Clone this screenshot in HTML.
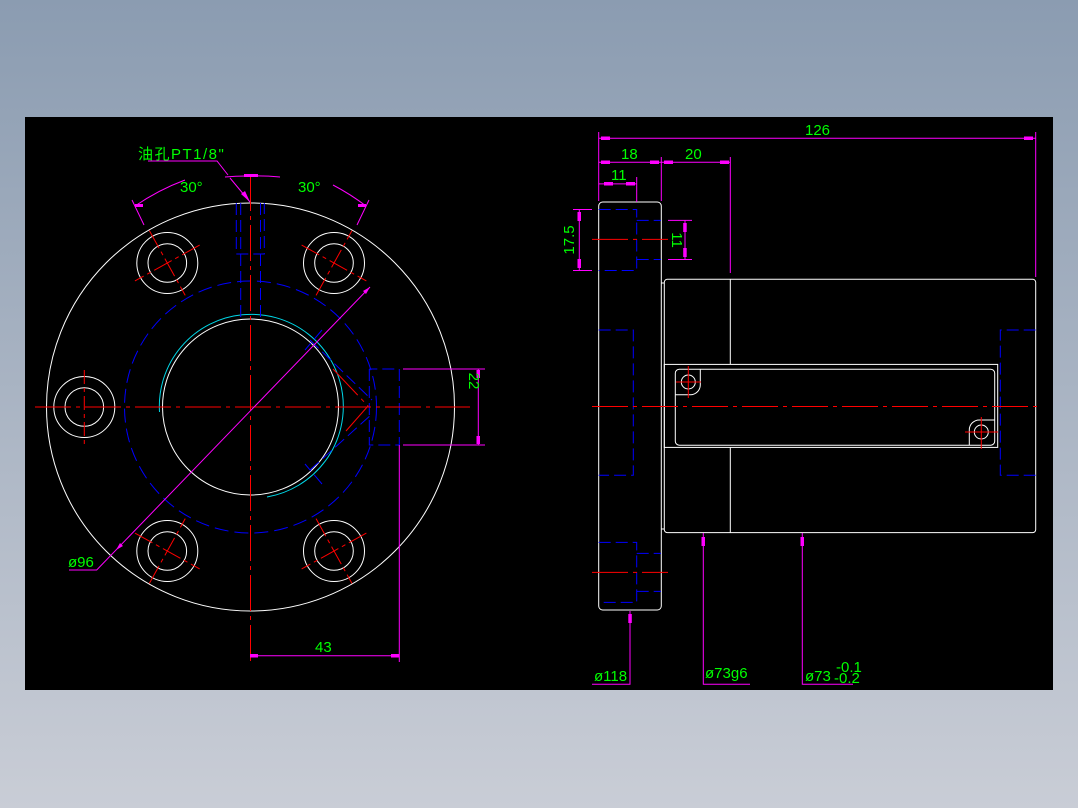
<!DOCTYPE html>
<html><head><meta charset="utf-8"><style>
html,body{margin:0;padding:0;width:1078px;height:808px;overflow:hidden;background:linear-gradient(#8b9cb1,#c9cdd6);}
svg{position:absolute;left:0;top:0}
text{font-family:"Liberation Sans","Noto Sans CJK SC",sans-serif;fill:#00ff00;font-size:15px}
</style></head><body>
<svg width="1078" height="808" viewBox="0 0 1078 808">
<rect x="25" y="117" width="1028" height="573" fill="#000"/>
<g fill="none" stroke-width="1">
<g stroke="#fff">
<circle cx="250.5" cy="407" r="204"/>
<circle cx="250.5" cy="407" r="88"/>
<circle cx="167.3" cy="263" r="30.5"/><circle cx="167.3" cy="263" r="19.3"/>
<circle cx="334" cy="263" r="30.5"/><circle cx="334" cy="263" r="19.3"/>
<circle cx="167.3" cy="551" r="30.5"/><circle cx="167.3" cy="551" r="19.3"/>
<circle cx="334" cy="551" r="30.5"/><circle cx="334" cy="551" r="19.3"/>
<circle cx="84.3" cy="407" r="30.5"/><circle cx="84.3" cy="407" r="19.3"/>
</g>
<path d="M159.5 412 A92 92 0 1 1 267 497" stroke="#00d8e8"/>
<circle cx="250.5" cy="407" r="126" stroke="#0000ff" stroke-dasharray="14 6"/>
<g stroke="#0000ff" stroke-dasharray="12 5">
<path d="M236.3 203 V254 H264.3 V203 M240.7 203 V318 M260.5 203 V318"/>
<path d="M369.3 369 V445 H399.3 V369 H369.3"/>
<path d="M310 340 L372 400 M310 470 L372 414 M322 330 L305 350 M322 484 L305 464"/>
</g>
<g stroke="#ff0000" stroke-dasharray="36 5 4 5">
<path d="M35 407 H470 M250.5 175 V662"/>
<path d="M333 369 L368 406 L346 431"/>
</g>
<g stroke="#ff0000">
<g transform="translate(167.3 263) rotate(61)"><path d="M-37 0 H37 M0 -37 V37" stroke-dasharray="20 4 4 4"/></g>
<g transform="translate(334 263) rotate(-61)"><path d="M-37 0 H37 M0 -37 V37" stroke-dasharray="20 4 4 4"/></g>
<g transform="translate(167.3 551) rotate(-61)"><path d="M-37 0 H37 M0 -37 V37" stroke-dasharray="20 4 4 4"/></g>
<g transform="translate(334 551) rotate(61)"><path d="M-37 0 H37 M0 -37 V37" stroke-dasharray="20 4 4 4"/></g>
<path d="M84.3 370 V444" stroke-dasharray="14 4 4 4"/>
</g>
<g stroke="#ff00ff">
<path d="M148 161 H217 L228 175 M230 178 L250 202"/>
<path d="M135 206 A231 231 0 0 1 185 180 M225 177 A231 231 0 0 1 250 176 A231 231 0 0 1 280 177 M333 185 A231 231 0 0 1 366 206"/>
<path d="M144 225 L132 200 M357 225 L369 200"/>
<path d="M370 287 L96.7 570 H69"/>
<path d="M250 655.7 H399.3 M399.3 445 V662"/>
<path d="M403 369 H485 M403 445 H485 M478.3 369 V445"/>
</g>
<g fill="#ff00ff">
<rect x="250" y="654" width="8" height="3.5"/><rect x="391" y="654" width="8" height="3.5"/>
<rect x="476.5" y="370" width="3.5" height="8"/><rect x="476.5" y="436" width="3.5" height="8"/>
<path d="M250 202 L241 194 L245 191Z"/>
<rect x="135" y="204" width="8" height="3"/><rect x="358" y="204" width="8" height="3"/>
<rect x="244" y="174" width="14" height="3"/>
<path d="M370 287 L363 291 L366 294Z M116 550 L123 546 L120 543Z"/>
</g>
<g stroke="#fff">
<rect x="598.7" y="202" width="62.6" height="408" rx="4"/>
<path d="M661.3 283 H664.3 M661.3 529 H664.3"/>
<rect x="664.3" y="279.3" width="371.4" height="253.3" rx="3"/>
<path d="M730.3 279.3 V364.4 M730.3 447.4 V532.6"/>
<rect x="664.3" y="364.4" width="333.4" height="83"/>
<rect x="675.3" y="369.2" width="319.4" height="76" rx="4"/>
<circle cx="688.3" cy="382" r="7"/><circle cx="981.3" cy="432" r="7"/>
<path d="M675.3 394.8 H690 A10 10 0 0 0 700.3 385 V369.2"/>
<path d="M969.3 445.2 V430 A10 10 0 0 1 980 420 H994.7"/>
</g>
<g stroke="#0000ff" stroke-dasharray="12 5">
<path d="M598.7 209.5 H636.7 V270.5 H598.7 M636.7 220.4 H661 M636.7 259.5 H661"/>
<path d="M598.7 542.4 H636.7 V602.4 H598.7 M636.7 553.4 H661 M636.7 591.4 H661"/>
<path d="M598.7 330 H633.3 V475.2 H598.7"/>
<path d="M1035.7 330 H1000.3 V475.2 H1035.7"/>
</g>
<g stroke="#ff0000" stroke-dasharray="36 5 4 5">
<path d="M592 406.5 H1042 M592 239.4 H668 M592 572.4 H668"/>
</g>
<g stroke="#ff0000">
<path d="M676 382 H701 M688.3 366 V398 M965 432 H998 M981.3 417 V449"/>
</g>
<g stroke="#ff00ff">
<path d="M598.7 138.2 H1035.7 M598.7 132 V201 M1035.7 132 V277"/>
<path d="M598.7 162.3 H730.3 M661.3 157 V201 M730.3 157 V273"/>
<path d="M598.7 183.9 H636.7 M636.7 177 V202"/>
<path d="M579.3 209.5 V270.5 M573 209.5 H592 M573 270.5 H592"/>
<path d="M685 220.4 V259.5 M668 220.4 H692 M668 259.5 H692"/>
<path d="M630 611 V684.2 H592"/>
<path d="M703.3 533 V684.2 H750"/>
<path d="M802.3 533 V684.2 H853"/>
</g>
<g fill="#ff00ff">
<rect x="601" y="136.5" width="9" height="3.5"/><rect x="1024" y="136.5" width="9" height="3.5"/>
<rect x="601" y="160.5" width="9" height="3.5"/><rect x="650" y="160.5" width="9" height="3.5"/>
<rect x="664" y="160.5" width="9" height="3.5"/><rect x="720" y="160.5" width="9" height="3.5"/>
<rect x="604" y="182" width="9" height="3.5"/><rect x="626" y="182" width="9" height="3.5"/>
<rect x="577.5" y="212" width="3.5" height="9"/><rect x="577.5" y="259" width="3.5" height="9"/>
<rect x="683.2" y="223" width="3.5" height="9"/><rect x="683.2" y="248" width="3.5" height="9"/>
<rect x="628.3" y="614" width="3.5" height="9"/><rect x="701.5" y="537" width="3.5" height="9"/><rect x="800.5" y="537" width="3.5" height="9"/>
</g>
</g>
<text x="138" y="159" font-size="16" letter-spacing="1.5">油孔PT1/8"</text>
<text x="180" y="192">30°</text>
<text x="298" y="192">30°</text>
<text x="68" y="567">ø96</text>
<text x="315" y="652">43</text>
<text transform="translate(469 381) rotate(90)" text-anchor="middle">22</text>
<text x="805" y="135">126</text>
<text x="621" y="159">18</text>
<text x="685" y="159">20</text>
<text x="611" y="180">11</text>
<text transform="translate(574 240) rotate(-90)" text-anchor="middle">17.5</text>
<text transform="translate(672 240) rotate(90)" text-anchor="middle">11</text>
<text x="594" y="681">ø118</text>
<text x="705" y="678">ø73g6</text>
<text x="805" y="681">ø73</text>
<text x="836" y="672" font-size="10">-0.1</text>
<text x="834" y="683" font-size="10">-0.2</text>
</svg>
</body></html>
